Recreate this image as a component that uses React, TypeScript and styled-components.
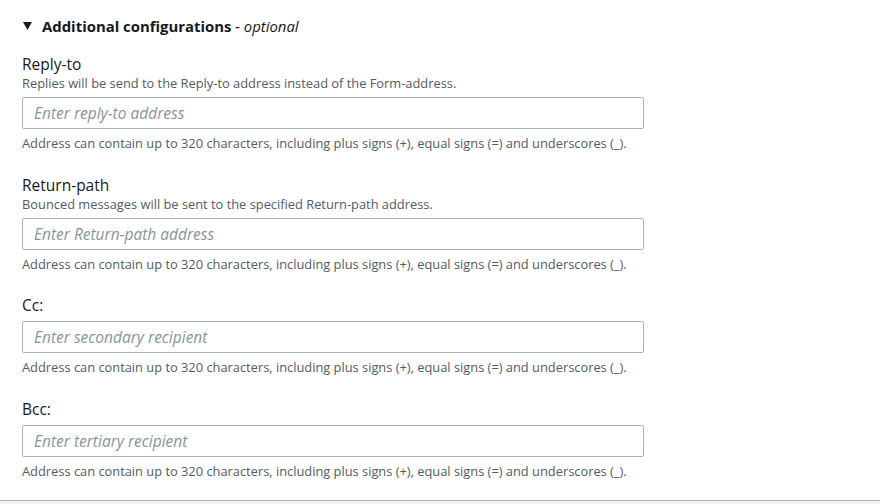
import React from "react";
import styled, { createGlobalStyle } from "styled-components";

const GlobalStyle = createGlobalStyle`
  html, body {
    margin: 0;
    padding: 0;
    background: #f2f3f3;
  }
  body {
    font-family: "Open Sans", "Liberation Sans", Arial, sans-serif;
    color: #16191f;
  }
`;

const Panel = styled.section`
  width: 880px;
  height: 501px;
  box-sizing: border-box;
  background: #ffffff;
  border-bottom: 1px solid #aab7b8;
  padding: 16px 0 0 22px;
  display: flex;
  flex-direction: column;
`;

const Header = styled.div`
  display: flex;
  align-items: center;
  height: 20px;
  gap: 10px;
  font-size: 14.9px;
  line-height: 20px;
  color: #16191f;
  margin-bottom: 18px;
`;

const Caret = styled.svg`
  width: 9px;
  height: 8px;
  margin-left: 1px;
  flex: none;
`;

const HeaderTitle = styled.span`
  font-weight: 700;
`;

const Optional = styled.span`
  font-style: italic;
  font-weight: 400;
`;

const Fields = styled.div`
  display: flex;
  flex-direction: column;
  gap: 23.5px;
`;

const Field = styled.div`
  display: flex;
  flex-direction: column;
  width: 622px;
`;

const Label = styled.label`
  font-size: 15.5px;
  line-height: 20px;
  color: #16191f;
`;

const Description = styled.div`
  font-size: 12.85px;
  line-height: 16px;
  color: #545b64;
  margin-top: 1px;
`;

const Input = styled.input`
  box-sizing: border-box;
  width: 622px;
  height: 32px;
  margin-top: 6px;
  padding: 0 11px;
  border: 1px solid #aab7b8;
  border-radius: 2px;
  font-family: "Open Sans", "Liberation Sans", Arial, sans-serif;
  font-size: 15.5px;
  color: #16191f;
  background: #fff;
  outline: none;
  &::placeholder {
    color: #879596;
    font-style: italic;
  }
`;

const Hint = styled.div`
  font-size: 12.85px;
  line-height: 16px;
  color: #545b64;
  margin-top: 6px;
`;

const hint =
  "Address can contain up to 320 characters, including plus signs (+), equal signs (=) and underscores (_).";

const fields = [
  {
    label: "Reply-to",
    description: "Replies will be send to the Reply-to address instead of the Form-address.",
    placeholder: "Enter reply-to address",
  },
  {
    label: "Return-path",
    description: "Bounced messages will be sent to the specified Return-path address.",
    placeholder: "Enter Return-path address",
  },
  { label: "Cc:", placeholder: "Enter secondary recipient" },
  { label: "Bcc:", placeholder: "Enter tertiary recipient" },
];

export default function App() {
  return (
    <>
      <GlobalStyle />
      <Panel>
        <Header>
          <Caret viewBox="0 0 9 8">
            <polygon points="0,0 9,0 4.5,8" fill="#16191f" />
          </Caret>
          <span>
            <HeaderTitle>Additional configurations</HeaderTitle>
            <Optional> - optional</Optional>
          </span>
        </Header>
        <Fields>
          {fields.map((f) => (
            <Field key={f.label}>
              <Label>{f.label}</Label>
              {f.description && <Description>{f.description}</Description>}
              <Input placeholder={f.placeholder} />
              <Hint>{hint}</Hint>
            </Field>
          ))}
        </Fields>
      </Panel>
    </>
  );
}
